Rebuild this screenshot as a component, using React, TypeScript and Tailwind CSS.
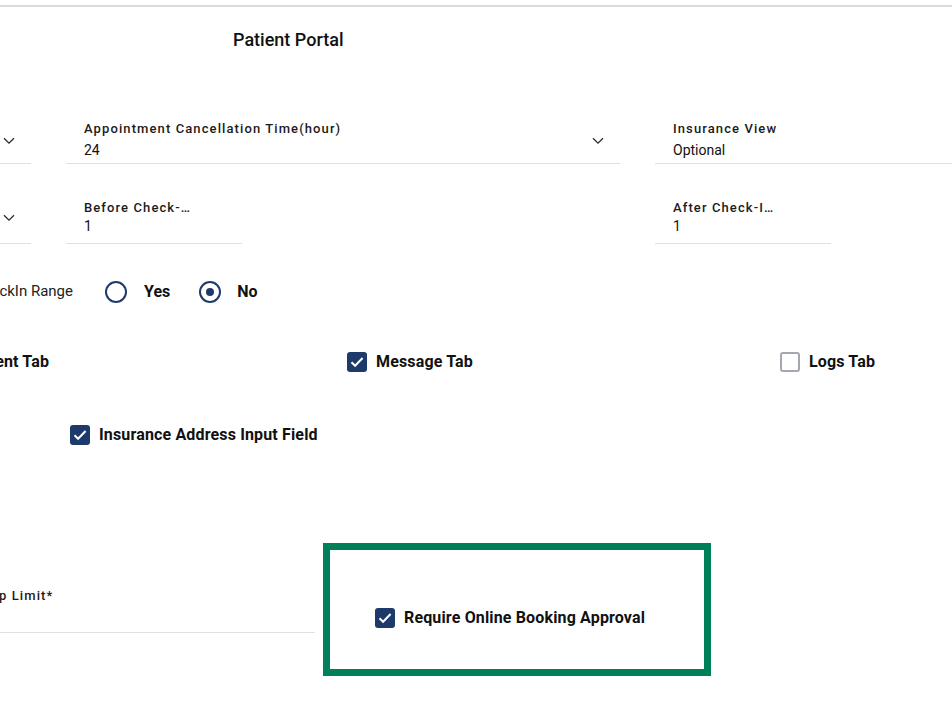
import React from "react";

const Chevron = () => (
  <svg width="12" height="8" viewBox="0 0 12 8" className="shrink-0">
    <path d="M1 1.2l5 5 5-5" fill="none" stroke="#2b2b2b" strokeWidth="1.3" />
  </svg>
);

const Check = ({ checked }: { checked: boolean }) =>
  checked ? (
    <span className="flex h-[20px] w-[20px] shrink-0 items-center justify-center rounded-[3px] bg-[#1e3a6b]">
      <svg width="14" height="12" viewBox="0 0 14 12">
        <path d="M1.5 6.2l3.6 3.6L12.6 2" fill="none" stroke="#fff" strokeWidth="2" />
      </svg>
    </span>
  ) : (
    <span className="h-[20px] w-[20px] shrink-0 rounded-[3px] border-2 border-[#a3a7ae] bg-white" />
  );

const Radio = ({ on }: { on: boolean }) => (
  <span className="flex h-[22px] w-[22px] shrink-0 items-center justify-center rounded-full border-2 border-[#1e3a6b]">
    {on && <span className="h-[8px] w-[8px] rounded-full bg-[#1e3a6b]" />}
  </span>
);

const labelCls =
  "text-[13px] font-medium leading-4 tracking-[1.1px] text-[#1b1b1b] whitespace-nowrap";

function Field({
  label,
  value,
  chevron,
  narrow,
  row2,
  className = "",
}: {
  label: string;
  value: string;
  chevron?: boolean;
  narrow?: boolean;
  row2?: boolean;
  className?: string;
}) {
  return (
    <div
      className={`flex items-center border-b border-[#e0e0e0] pl-[18px] pr-[16px] pt-[1px] ${
        row2 ? "pb-[7px]" : "pb-[3px]"
      } ${className}`}
    >
      <div className="min-w-0 flex-1">
        <div className={`${labelCls} ${narrow ? "w-[106px] truncate" : ""}`}>{label}</div>
        <div
          className={`${row2 ? "mt-0" : "mt-[3px]"} text-[14px] leading-5 text-[#111]`}
        >
          {value}
        </div>
      </div>
      {chevron && <Chevron />}
    </div>
  );
}

function CheckItem({ label, checked }: { label: string; checked: boolean }) {
  return (
    <div className="flex items-center gap-[9px]">
      <Check checked={checked} />
      <span className="text-[16px] font-bold leading-[22px] tracking-[0.15px] text-[#111] whitespace-nowrap">
        {label}
      </span>
    </div>
  );
}

export default function App() {
  return (
    <div className="relative h-[715px] w-[952px] overflow-hidden bg-white font-['Roboto',sans-serif]">
      <div className="h-[5px]" />
      <div className="h-[2px] bg-[#dadada]" />

      <h1 className="mt-[21px] pl-[233px] text-[18px] font-medium leading-6 text-[#111]">
        Patient Portal
      </h1>

      {/* time settings */}
      <div className="ml-[-523px] mt-[68px] grid w-[1732px] grid-cols-[554px_554px_554px] gap-x-[35px]">
        <Field label="Appointment Reschedule Time(hour)" value="24" chevron />
        <Field label="Appointment Cancellation Time(hour)" value="24" chevron />
        <Field label="Insurance View" value="Optional" chevron />
      </div>

      <div className="ml-[-523px] mt-[35px] grid w-[1732px] grid-cols-[554px_554px_554px] gap-x-[35px]">
        <Field label="CheckIn Range Unit" value="Hour" chevron row2 />
        <Field label="Before Check-In Time" value="1" narrow row2 className="w-[176px]" />
        <Field label="After Check-In Time" value="1" narrow row2 className="w-[176px]" />
      </div>

      {/* check-in range */}
      <div className="mt-[37px] flex items-center">
        <div className="flex w-[73px] justify-end self-start">
          <span className="shrink-0 whitespace-nowrap text-[15px] leading-[20px] text-[#222]">
            Restrict CheckIn Range
          </span>
        </div>
        <div className="ml-[32px] flex items-center">
          <Radio on={false} />
          <span className="ml-[17px] text-[16px] font-bold leading-[22px] text-[#111]">Yes</span>
          <span className="ml-[29px]">
            <Radio on />
          </span>
          <span className="ml-[16px] text-[16px] font-bold leading-[22px] text-[#111]">No</span>
        </div>
      </div>

      {/* tabs */}
      <div className="ml-[-75px] mt-[48px] grid grid-cols-[422px_433px_433px]">
        <CheckItem label="Payment Tab" checked />
        <CheckItem label="Message Tab" checked />
        <CheckItem label="Logs Tab" checked={false} />
      </div>

      <div className="ml-[70px] mt-[51px]">
        <CheckItem label="Insurance Address Input Field" checked />
      </div>

      {/* booking */}
      <div className="mt-[97px] flex items-start">
        <div className="ml-[-111px] w-[426px] border-b border-[#e0e0e0] pl-[18px] pt-[45px]">
          <div className={labelCls}>Booking Group Limit*</div>
          <div className="h-[28px]" />
        </div>
        <div className="ml-[8px] h-[133px] w-[388px] border-[7px] border-[#00805a] pl-[45px] pt-[57px]">
          <CheckItem label="Require Online Booking Approval" checked />
        </div>
      </div>
    </div>
  );
}
